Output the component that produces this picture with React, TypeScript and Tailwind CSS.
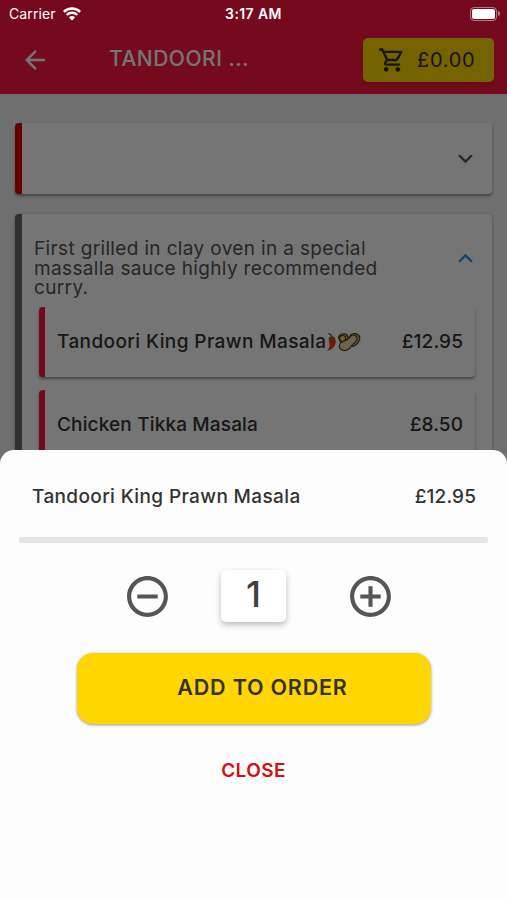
import { FC } from 'react';
import {
  MdAddCircleOutline,
  MdArrowBack,
  MdExpandLess,
  MdExpandMore,
  MdOutlineShoppingCart,
  MdRemoveCircleOutline,
} from 'react-icons/md';

type Item = {
  name: string;
  price: string;
  hot?: boolean;
};

const items: Item[] = [
  { name: 'Tandoori King Prawn Masala', price: '£12.95', hot: true },
  { name: 'Chicken Tikka Masala', price: '£8.50' },
];

const description = [
  'First grilled in clay oven in a special',
  'massalla sauce highly recommended',
  'curry.',
];

const Chilli: FC = () => (
  <svg width="11" height="20" viewBox="0 0 11 20" aria-hidden="true">
    <path
      d="M3 5.500C5.500 3.500 9.800 4.800 9.800 9.400c0 4.600-3.600 8.600-8.400 9.200 1.600-2.200 2.500-4.400 2.100-6.800C3.200 9.600 2 7.700 3 5.500Z"
      fill="#f03a20"
    />
    <path d="M2.600 6.300C3.600 4 7 3.600 8.800 5.400 6.800 5.600 4.800 7.600 2.600 6.300Z" fill="#4c8a35" />
    <path d="M5.500 4.800C5.400 3 4.400 2 2.400 1.600" stroke="#4c8a35" strokeWidth="1.500" fill="none" />
  </svg>
);

const Peanuts: FC = () => (
  <svg width="24" height="20" viewBox="0 0 24 20" aria-hidden="true">
    <g stroke="#47331a" strokeWidth="1.100">
      <path
        d="M13.500 3c3-2.600 8.700-1.500 9.300 2.200.6 4.300-3.300 8.500-7.300 9.300L11 10Z"
        fill="#d8ae61"
      />
      <path d="M1.600 6c.1-4 5.600-5.600 8.400-3 2 2 1.600 5-.3 6.700L4 11Z" fill="#d8ae61" />
      <circle cx="5.600" cy="6.500" r="3" fill="#f3dd68" />
      <path
        d="M13.800 4.200c2-2.200 5.500-1.200 6.100 1.600.5 2.800-1.500 4.400-3.500 5.800-1.600 1.100-1.700 2.400-3.300 4.300-2.600 3.100-7.600 3.700-9.900.8-2.200-2.900-.4-6.200 3-7.200 3.500-1 5.500-2.500 7.600-5.300Z"
        fill="#f4d8a5"
      />
    </g>
  </svg>
);

const StatusBar: FC = () => (
  <div className="absolute inset-x-0 top-0 z-20 flex h-[27px] items-center justify-between pr-[7px] pl-[9px] text-white">
    <div className="flex w-[120px] items-center gap-[7px] text-[14px]">
      <span className="tracking-[0.1px]">Carrier</span>
      <svg width="18" height="14" viewBox="0 0 18 14" fill="none" stroke="white" aria-hidden="true">
        <path d="M.8 4.900a11.800 11.800 0 0 1 16.400 0" strokeWidth="2.500" />
        <path d="M3.700 7.900a7.600 7.600 0 0 1 10.600 0" strokeWidth="2.400" />
        <path d="M9 13.500 5.900 10.400a4.500 4.500 0 0 1 6.200 0Z" fill="white" stroke="none" />
      </svg>
    </div>
    <span className="-ml-[2px] text-[14px] font-semibold tracking-[0.4px]">3:17 AM</span>
    <div className="flex w-[120px] items-center justify-end gap-px">
      <div className="h-[14px] w-[27px] rounded-[4px] border border-white/45 p-px">
        <div className="h-full rounded-[2px] bg-white" />
      </div>
      <div className="h-[5px] w-[2px] rounded-r-full bg-white/45" />
    </div>
  </div>
);

const Header: FC = () => (
  <header className="flex h-[94px] items-end justify-between bg-[#ff1744] pr-[13px] pb-[12px] pl-[20px]">
    <div className="flex h-[44px] items-center">
      <MdArrowBack className="size-[30px] text-white" />
      <h1 className="-mt-[2px] ml-[59px] text-[21px] font-medium tracking-[0.5px] text-white">TANDOORI ...</h1>
    </div>
    <button className="flex h-[44px] w-[131px] items-center rounded-[5px] bg-[#ffd800] pl-[15px] text-[#333333] shadow-md">
      <MdOutlineShoppingCart className="size-[28px]" />
      <span className="ml-[11px] text-[20px] tracking-[0.7px]">£0.00</span>
    </button>
  </header>
);

const MenuItem: FC<{ item: Item }> = ({ item }) => (
  <li className="flex h-[70px] items-center justify-between rounded-[4px] border-l-[6px] border-[#ff1744] bg-white pr-[12px] pl-[12px] text-[19px] font-medium text-[#333333] shadow-[0_2px_3px_rgba(0,0,0,0.4)]">
    <div className="flex items-center">
      <span className={item.hot ? 'tracking-[0.4px]' : 'tracking-[0.15px]'}>{item.name}</span>
      {item.hot && (
        <>
          <Chilli />
          <Peanuts />
        </>
      )}
    </div>
    <span className="tracking-[0.1px]">{item.price}</span>
  </li>
);

const Menu: FC = () => (
  <main className="flex flex-col gap-[20px] px-[15px] pt-[29px]">
    <section className="flex h-[71px] items-center justify-end rounded-[4px] border-l-[7px] border-[#dd0000] bg-white pr-[12px] shadow-[0_2px_3px_rgba(0,0,0,0.4)]">
      <MdExpandMore className="size-[29px] text-[#555555]" />
    </section>
    <section className="h-[500px] rounded-[4px] border-l-[7px] border-[#666666] bg-white px-[17px] shadow-[0_1px_3px_rgba(0,0,0,0.4)]">
      <div className="flex h-[93px] justify-between pt-[25px]">
        <div className="-ml-[5px] w-[370px] text-[19px] leading-[19.5px] tracking-[0.35px] text-[#555555]">
          {description.map((line) => (
            <p key={line}>{line}</p>
          ))}
        </div>
        <MdExpandLess className="mt-[5px] -mr-[5px] size-[29px] text-[#2196f3]" />
      </div>
      <ul className="flex flex-col gap-[13px]">
        {items.map((item) => (
          <MenuItem key={item.name} item={item} />
        ))}
      </ul>
    </section>
  </main>
);

const OrderSheet: FC = () => (
  <div className="absolute inset-x-0 bottom-0 z-10 flex h-[450px] flex-col items-center rounded-t-[14px] bg-[#fdfdfd] px-[19px] text-[#333333]">
    <div className="flex h-[87px] w-full items-center justify-between pt-[7px] pr-[12px] pl-[13px] text-[19px] font-medium">
      <span className="tracking-[0.37px]">Tandoori King Prawn Masala</span>
      <span className="tracking-[0.1px]">£12.95</span>
    </div>
    <div className="h-[6px] w-full rounded-[2px] bg-[#e5e5e5]" />
    <div className="mt-[27px] flex h-[52px] w-full items-center pl-[104px] text-[#555555]">
      <MdRemoveCircleOutline className="mt-px size-[49px]" />
      <div className="ml-[49px] flex h-[52px] w-[65px] items-center justify-center rounded-[5px] bg-white text-[36px] font-medium text-[#404040] shadow-[0_3px_6px_rgba(0,0,0,0.25)]">
        <span className="-mt-[4px]">1</span>
      </div>
      <MdAddCircleOutline className="mt-px ml-[60px] size-[49px]" />
    </div>
    <button className="mt-[31px] flex h-[71px] w-[354px] items-center justify-center rounded-[16px] bg-[#ffd600] pb-[2px] pl-[18px] text-[21.5px] font-semibold tracking-[0.8px] shadow-[0_1px_3px_rgba(0,0,0,0.4)]">
      ADD TO ORDER
    </button>
    <button className="mt-[33px] text-[19px] font-semibold tracking-[0.4px] text-[#d50f0f]">CLOSE</button>
  </div>
);

const App: FC = () => (
  <div className="relative h-[900px] w-[507px] overflow-hidden bg-[#f1f1f1] font-['Inter',sans-serif]">
    <Header />
    <Menu />
    <div className="absolute inset-0 bg-black/54" />
    <StatusBar />
    <OrderSheet />
  </div>
);

export default App;
